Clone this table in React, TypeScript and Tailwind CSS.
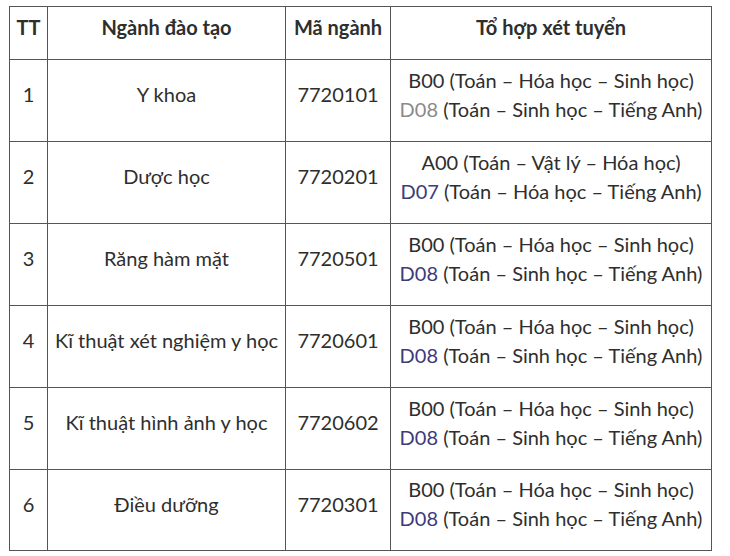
const rows = [
  { tt: "1", name: "Y khoa", code: "7720101", a: "B00 (Toán – Hóa học – Sinh học)", bCode: "D08", b: " (Toán – Sinh học – Tiếng Anh)", gray: true },
  { tt: "2", name: "Dược học", code: "7720201", a: "A00 (Toán – Vật lý – Hóa học)", bCode: "D07", b: " (Toán – Hóa học – Tiếng Anh)" },
  { tt: "3", name: "Răng hàm mặt", code: "7720501", a: "B00 (Toán – Hóa học – Sinh học)", bCode: "D08", b: " (Toán – Sinh học – Tiếng Anh)" },
  { tt: "4", name: "Kĩ thuật xét nghiệm y học", code: "7720601", a: "B00 (Toán – Hóa học – Sinh học)", bCode: "D08", b: " (Toán – Sinh học – Tiếng Anh)" },
  { tt: "5", name: "Kĩ thuật hình ảnh y học", code: "7720602", a: "B00 (Toán – Hóa học – Sinh học)", bCode: "D08", b: " (Toán – Sinh học – Tiếng Anh)" },
  { tt: "6", name: "Điều dưỡng", code: "7720301", a: "B00 (Toán – Hóa học – Sinh học)", bCode: "D08", b: " (Toán – Sinh học – Tiếng Anh)" },
];

export default function App() {
  return (
    <div className="w-[730px] h-[556px] bg-white pl-[9px] pt-[6px] font-['Lato','Noto_Sans',sans-serif] text-[#2e2e2e] overflow-hidden">
      <table className="border-collapse table-fixed w-[702px] text-[20px] leading-[29px]">
        <colgroup>
          <col className="w-[38px]" />
          <col className="w-[238px]" />
          <col className="w-[105px]" />
          <col className="w-[321px]" />
        </colgroup>
        <thead>
          <tr className="h-[53px]">
            {["TT", "Ngành đào tạo", "Mã ngành", "Tổ hợp xét tuyển"].map((h) => (
              <th key={h} className="border border-[#555] font-bold text-center align-middle pb-[11px] whitespace-nowrap">
                {h}
              </th>
            ))}
          </tr>
        </thead>
        <tbody>
          {rows.map((r, i) => (
            <tr key={r.tt} className={i === 5 ? "h-[81px]" : "h-[82px]"}>
              <td className="border border-[#555] text-center align-middle pb-[12px]">{r.tt}</td>
              <td className="border border-[#555] text-center align-middle pb-[12px] whitespace-nowrap">{r.name}</td>
              <td className="border border-[#555] text-center align-middle pb-[12px]">{r.code}</td>
              <td className="border border-[#555] text-center align-middle pb-[12px] whitespace-nowrap">
                <div>{r.a}</div>
                <div>
                  <span className={r.gray ? "text-[#8a8a8a]" : "text-[#3c3b7c]"}>{r.bCode}</span>
                  {r.b}
                </div>
              </td>
            </tr>
          ))}
        </tbody>
      </table>
    </div>
  );
}
